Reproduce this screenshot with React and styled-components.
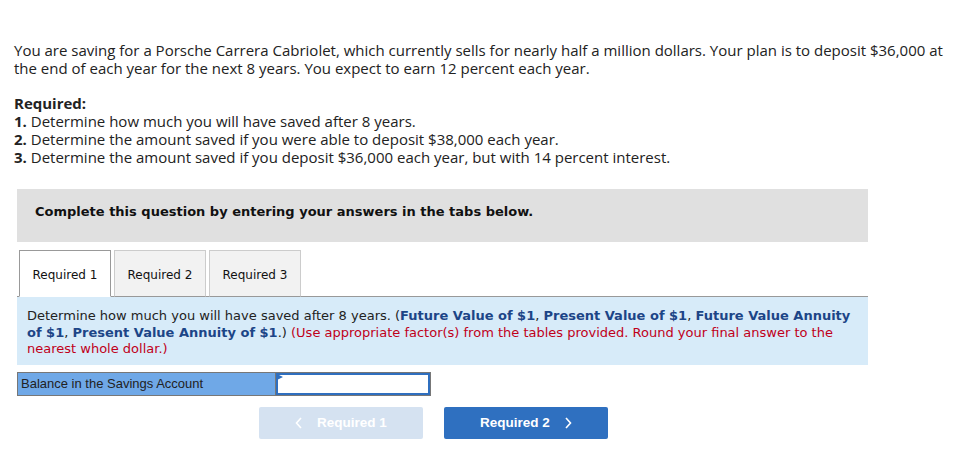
import React from "react";
import styled, { createGlobalStyle } from "styled-components";

const Global = createGlobalStyle`
  html, body { margin: 0; padding: 0; background: #fff; }
  body { font-family: "Open Sans", "Lato", sans-serif; color: #222; }
`;

const Page = styled.div`
  padding: 41px 17px 20px 14px;
  width: 976px;
  box-sizing: border-box;
`;

const Para = styled.p`
  margin: 0;
  font-size: 15px;
  line-height: 18px;
  color: #222;
`;

const ReqBlock = styled.div`
  margin-top: 17px;
  font-size: 15px;
  line-height: 18px;
`;

const Line = styled.div``;

const Card = styled.div`
  margin-top: 23px;
  margin-left: 3px;
  width: 851px;
  font-family: "DejaVu Sans", Verdana, sans-serif;
`;

const Banner = styled.div`
  background: #e0e0e0;
  height: 53px;
  box-sizing: border-box;
  padding: 14px 18px;
  font-size: 13px;
  font-weight: bold;
  line-height: 17px;
  color: #111;
`;

const TabRow = styled.div`
  display: flex;
  gap: 3px;
  margin-top: 8px;
  padding-left: 2px;
  position: relative;
  z-index: 1;
`;

const Tab = styled.div`
  width: 92px;
  height: 47px;
  box-sizing: border-box;
  display: flex;
  align-items: center;
  justify-content: center;
  font-size: 12px;
  color: #111;
  border: 1px solid ${(p) => (p.$active ? "#999" : "#ccc")};
  border-bottom: ${(p) => (p.$active ? "1px solid #fff" : "1px solid #999")};
  background: ${(p) => (p.$active ? "#fff" : "#f2f2f2")};
  margin-bottom: -1px;
  padding-top: 2px;
`;

const Panel = styled.div`
  background: #d7ebf9;
  border-top: 1px solid #999;
  padding: 11px 10px 7px 10px;
  font-size: 13px;
  line-height: 16.5px;
  color: #222;
`;

const Link = styled.span`
  color: #1c4587;
  font-weight: bold;
`;

const Red = styled.span`
  color: #c0001a;
`;

const AnswerRow = styled.div`
  display: flex;
  margin-top: 7px;
  width: 414px;
  height: 24px;
  border: 1px solid #777;
  box-sizing: border-box;
`;

const Label = styled.div`
  width: 258px;
  background: #6fa8e7;
  border-right: 1px solid #777;
  font-family: "Liberation Sans", Arial, sans-serif;
  font-size: 13px;
  line-height: 22px;
  padding-left: 3px;
  color: #222;
  box-sizing: border-box;
`;

const InputCell = styled.div`
  flex: 1;
  position: relative;
  background: #fff;
  border: 2px solid #2f6fbf;
`;

const Marker = styled.div`
  position: absolute;
  left: -1px;
  top: -1px;
  width: 0;
  height: 0;
  border-top: 3px solid transparent;
  border-bottom: 3px solid transparent;
  border-left: 6px solid #2f6fbf;
`;

const NavRow = styled.div`
  display: flex;
  gap: 21px;
  margin-top: 11px;
  padding-left: 242px;
`;

const NavButton = styled.div`
  width: 164px;
  height: 32px;
  border-radius: 2px;
  display: flex;
  align-items: center;
  justify-content: center;
  gap: 14px;
  font-family: "Liberation Sans", Arial, sans-serif;
  font-weight: bold;
  font-size: 13.5px;
  color: #fff;
  background: ${(p) => (p.$disabled ? "#d5e2f1" : "#2f70c0")};
`;

const Chevron = ({ dir }) => (
  <svg width="8" height="12" viewBox="0 0 8 12">
    <path
      d={dir === "left" ? "M6 1 L1.5 6 L6 11" : "M2 1 L6.5 6 L2 11"}
      fill="none"
      stroke="#fff"
      strokeWidth="1.6"
    />
  </svg>
);

export default function App() {
  return (
    <>
      <Global />
      <Page>
        <Para>
          You are saving for a Porsche Carrera Cabriolet, which currently sells for nearly half a
          million dollars. Your plan is to deposit $36,000 at the end of each year for the next 8
          years. You expect to earn 12 percent each year.
        </Para>
        <ReqBlock>
          <Line><b>Required:</b></Line>
          <Line><b>1.</b> Determine how much you will have saved after 8 years.</Line>
          <Line><b>2.</b> Determine the amount saved if you were able to deposit $38,000 each year.</Line>
          <Line><b>3.</b> Determine the amount saved if you deposit $36,000 each year, but with 14 percent interest.</Line>
        </ReqBlock>
        <Card>
          <Banner>Complete this question by entering your answers in the tabs below.</Banner>
          <TabRow>
            <Tab $active>Required 1</Tab>
            <Tab>Required 2</Tab>
            <Tab>Required 3</Tab>
          </TabRow>
          <Panel>
            Determine how much you will have saved after 8 years. (
            <Link>Future Value of $1</Link>, <Link>Present Value of $1</Link>,{" "}
            <Link>Future Value Annuity of $1</Link>, <Link>Present Value Annuity of $1</Link>.){" "}
            <Red>
              (Use appropriate factor(s) from the tables provided. Round your final answer to the
              nearest whole dollar.)
            </Red>
          </Panel>
          <AnswerRow>
            <Label>Balance in the Savings Account</Label>
            <InputCell>
              <Marker />
            </InputCell>
          </AnswerRow>
          <NavRow>
            <NavButton $disabled>
              <Chevron dir="left" />
              <span>Required 1</span>
            </NavButton>
            <NavButton>
              <span>Required 2</span>
              <Chevron dir="right" />
            </NavButton>
          </NavRow>
        </Card>
      </Page>
    </>
  );
}
